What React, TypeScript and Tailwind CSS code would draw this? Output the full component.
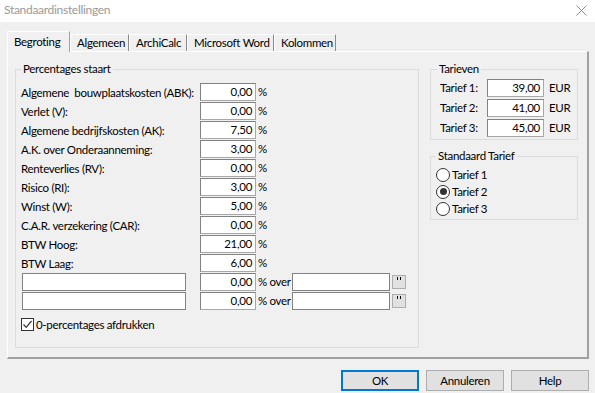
import React from "react";

const font = { fontFamily: 'Lato, "Noto Sans", sans-serif' };

function Legend({ children, left }: { children: React.ReactNode; left: string }) {
  return (
    <span className={`absolute -top-[9px] ${left} bg-[#f0f0f0] px-[2px] leading-[16px] text-[11.5px] text-black whitespace-nowrap`}>
      {children}
    </span>
  );
}

function NumBox({ value, w = "w-[56px]" }: { value: string; w?: string }) {
  return (
    <div className={`${w} shrink-0 h-[18px] bg-white border border-[#828282] border-r-[#a8a8a8] border-b-[#a8a8a8] flex items-center justify-end pr-[3px] text-[11.5px] leading-none`}>
      {value}
    </div>
  );
}

const rows: [string, string][] = [
  ["Algemene  bouwplaatskosten (ABK):", "0,00"],
  ["Verlet (V):", "0,00"],
  ["Algemene bedrijfskosten (AK):", "7,50"],
  ["A.K. over Onderaanneming:", "3,00"],
  ["Renteverlies (RV):", "0,00"],
  ["Risico (RI):", "3,00"],
  ["Winst (W):", "5,00"],
  ["C.A.R. verzekering (CAR):", "0,00"],
  ["BTW Hoog:", "21,00"],
  ["BTW Laag:", "6,00"],
];

function Tab({ label, w, active }: { label: string; w: string; active?: boolean }) {
  if (active) {
    return (
      <div className={`${w} shrink-0 whitespace-nowrap h-[21px] -mb-[1px] relative z-10 bg-[#f0f0f0] border-t border-l border-white border-r border-r-[#a0a0a0] flex items-center pl-[6px] pb-[1px] text-[11.5px]`}>
        {label}
      </div>
    );
  }
  return (
    <div className={`${w} shrink-0 whitespace-nowrap h-[17px] bg-[#f0f0f0] border-t border-l border-white border-r border-r-[#8a8a8a] flex items-center pl-[6px] text-[11.5px]`}>
      {label}
    </div>
  );
}

function Radio({ checked, label }: { checked?: boolean; label: string }) {
  return (
    <div className="h-[17px] flex items-center">
      <div className="w-[14px] h-[14px] rounded-full border border-[#333] bg-white flex items-center justify-center">
        {checked && <div className="w-[7px] h-[7px] rounded-full bg-[#333]" />}
      </div>
      <span className="ml-[2px] text-[11.5px] whitespace-nowrap">{label}</span>
    </div>
  );
}

function Btn({ label, primary }: { label: string; primary?: boolean }) {
  return (
    <div
      className={`w-[78px] h-[21px] flex items-center justify-center text-[11.5px] bg-[#e1e1e1] ${
        primary ? "border-2 border-[#0078d7]" : "border border-[#adadad]"
      }`}
    >
      {label}
    </div>
  );
}

export default function App() {
  return (
    <div className="w-[595px] h-[393px] bg-[#f0f0f0] text-black overflow-hidden flex flex-col tracking-[-0.3px]" style={font}>
      {/* title bar */}
      <div className="h-[22px] bg-white flex items-center justify-between pl-[4px] pr-[8px]">
        <span className="text-[12px] text-[#999] leading-none -mt-[2px]">Standaardinstellingen</span>
        <svg width="11" height="11" viewBox="0 0 11 11" className="-mt-[2px]">
          <path d="M0.5 0.5 L10.5 10.5 M10.5 0.5 L0.5 10.5" stroke="#8c8c8c" strokeWidth="1" />
        </svg>
      </div>

      <div className="pl-[7px] pt-[8px] flex flex-col">
        {/* tabs */}
        <div className="flex items-end h-[21px]">
          <Tab label="Begroting" w="w-[63px]" active />
          <Tab label="Algemeen" w="w-[59px]" />
          <Tab label="ArchiCalc" w="w-[58px]" />
          <Tab label="Microsoft Word" w="w-[87px]" />
          <Tab label="Kolommen" w="w-[62px]" />
        </div>
        {/* panel */}
        <div className="w-[582px] h-[308px] border-t border-l border-white border-r-2 border-b-2 border-r-[#a0a0a0] border-b-[#a0a0a0] flex pl-[7px] pt-[17px]">
          {/* left group */}
          <div className="relative w-[404px] h-[279px] border border-[#dcdcdc] pl-[5px] pt-[13px]">
            <Legend left="left-[5px]">Percentages staart</Legend>
            <div className="flex flex-col gap-[1px]">
              {rows.map(([label, val]) => (
                <div key={label} className="h-[18px] flex items-center">
                  <span className="w-[179px] shrink-0 whitespace-pre text-[11.5px] leading-none pt-[2px]">{label}</span>
                  <NumBox value={val} />
                  <span className="ml-[2px] text-[11.5px] leading-none">%</span>
                </div>
              ))}
              {[0, 1].map((i) => (
                <div key={i} className="h-[18px] flex items-center">
                  <div className="w-[164px] shrink-0 h-[18px] bg-white border border-[#828282] ml-[1px]" />
                  <div className="w-[14px] shrink-0" />
                  <NumBox value="0,00" />
                  <span className="ml-[2px] w-[34px] shrink-0 text-[11.5px] leading-none whitespace-nowrap">% over</span>
                  <div className="w-[98px] shrink-0 h-[18px] bg-white border border-[#828282]" />
                  <div className="ml-[2px] shrink-0 w-[14px] h-[14px] bg-[#e1e1e1] border border-[#adadad] flex justify-center pt-[1px] gap-[2px]">
                    <div className="w-[1px] h-[3px] bg-black" />
                    <div className="w-[1px] h-[3px] bg-black" />
                  </div>
                </div>
              ))}
            </div>
            <div className="flex items-center mt-[6px]">
              <div className="w-[13px] h-[13px] border border-[#333] bg-white flex items-center justify-center">
                <svg width="11" height="11" viewBox="0 0 11 11">
                  <path d="M1.5 5.5 L4.2 8.3 L9.5 2" fill="none" stroke="#333" strokeWidth="1.2" />
                </svg>
              </div>
              <span className="ml-[2px] text-[11.5px] whitespace-nowrap">0-percentages afdrukken</span>
            </div>
          </div>

          {/* right column */}
          <div className="ml-[11px] flex flex-col">
            <div className="relative w-[148px] h-[71px] border border-[#dcdcdc] pl-[9px] pt-[9px]">
              <Legend left="left-[6px]">Tarieven</Legend>
              <div className="flex flex-col gap-[2px]">
                {[
                  ["Tarief 1:", "39,00"],
                  ["Tarief 2:", "41,00"],
                  ["Tarief 3:", "45,00"],
                ].map(([l, v]) => (
                  <div key={l} className="h-[18px] flex items-center">
                    <span className="w-[47px] shrink-0 text-[11.5px] leading-none whitespace-nowrap">{l}</span>
                    <NumBox value={v} w="w-[57px]" />
                    <span className="ml-[5px] text-[11.5px] leading-none">EUR</span>
                  </div>
                ))}
              </div>
            </div>
            <div className="relative mt-[16px] w-[148px] h-[64px] border border-[#dcdcdc] pl-[5px] pt-[9px]">
              <Legend left="left-[5px]">Standaard Tarief</Legend>
              <Radio label="Tarief 1" />
              <Radio label="Tarief 2" checked />
              <Radio label="Tarief 3" />
            </div>
          </div>
        </div>
        {/* buttons */}
        <div className="flex justify-end gap-[7px] pr-[6px] mt-[11px]">
          <Btn label="OK" primary />
          <Btn label="Annuleren" />
          <Btn label="Help" />
        </div>
      </div>
    </div>
  );
}
